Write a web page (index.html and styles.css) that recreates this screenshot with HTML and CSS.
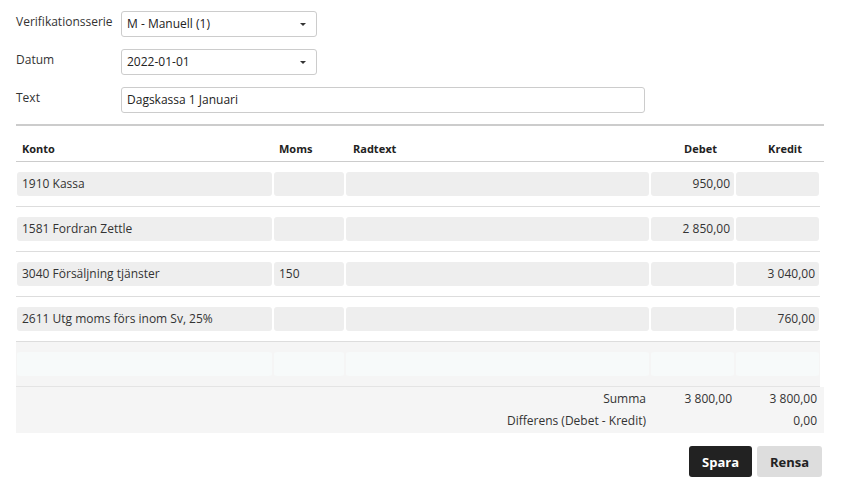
FILE: index.html
```html
<!DOCTYPE html>
<html lang="sv">
<head>
  <meta charset="UTF-8" />
  <title>Verifikation</title>
  <link rel="stylesheet" href="styles.css">
</head>
<body>
  <div class="voucher">
    <div class="fields">
      <label class="field-label">Verifikationsserie</label>
      <div class="select select-short">M - Manuell (1)<span class="caret"></span></div>

      <label class="field-label">Datum</label>
      <div class="select select-short">2022-01-01<span class="caret"></span></div>

      <label class="field-label">Text</label>
      <div class="text-input">Dagskassa 1 Januari</div>
    </div>

    <div class="rows">
      <div class="row head">
        <div>Konto</div>
        <div>Moms</div>
        <div>Radtext</div>
        <div class="num">Debet</div>
        <div class="num">Kredit</div>
      </div>

      <div class="row">
        <div class="cell">1910 Kassa</div>
        <div class="cell"></div>
        <div class="cell"></div>
        <div class="cell num">950,00</div>
        <div class="cell num"></div>
      </div>

      <div class="row">
        <div class="cell">1581 Fordran Zettle</div>
        <div class="cell"></div>
        <div class="cell"></div>
        <div class="cell num">2 850,00</div>
        <div class="cell num"></div>
      </div>

      <div class="row">
        <div class="cell">3040 Försäljning tjänster</div>
        <div class="cell">150</div>
        <div class="cell"></div>
        <div class="cell num"></div>
        <div class="cell num">3 040,00</div>
      </div>

      <div class="row">
        <div class="cell">2611 Utg moms förs inom Sv, 25%</div>
        <div class="cell"></div>
        <div class="cell"></div>
        <div class="cell num"></div>
        <div class="cell num">760,00</div>
      </div>

      <div class="row empty">
        <div class="cell"></div>
        <div class="cell"></div>
        <div class="cell"></div>
        <div class="cell"></div>
        <div class="cell"></div>
      </div>
    </div>

    <div class="totals">
      <div class="total-line">
        <span class="total-label">Summa</span>
        <span class="total-val">3 800,00</span>
        <span class="total-val">3 800,00</span>
      </div>
      <div class="total-line">
        <span class="total-label">Differens (Debet - Kredit)</span>
        <span class="total-val"></span>
        <span class="total-val">0,00</span>
      </div>
    </div>

    <div class="actions">
      <button class="btn btn-save">Spara</button>
      <button class="btn btn-clear">Rensa</button>
    </div>
  </div>
</body>
</html>
```

FILE: styles.css
```css
* {
  box-sizing: border-box;
}

body {
  margin: 0;
  font-family: 'Open Sans', sans-serif;
  font-size: 12px;
  color: #333;
  background: #fff;
}

.voucher {
  width: 808px;
  margin-left: 16px;
  padding-top: 11px;
}

/* top form */
.fields {
  display: grid;
  grid-template-columns: 105px auto;
  row-gap: 12px;
  padding-bottom: 11px;
  border-bottom: 2px solid #ccc;
}

.field-label {
  padding-top: 3px;
  line-height: 16px;
}

.select,
.text-input {
  position: relative;
  height: 26px;
  line-height: 24px;
  padding: 0 5px;
  border: 1px solid #ccc;
  border-radius: 3px;
  background: #fff;
  color: #222;
}

.select-short {
  width: 196px;
}

.text-input {
  width: 524px;
}

.caret {
  position: absolute;
  right: 10px;
  top: 11px;
  border-left: 3px solid transparent;
  border-right: 3px solid transparent;
  border-top: 3px solid #333;
}

/* rows */
.row {
  display: grid;
  grid-template-columns: 255px 70px 303px 83px 83px;
  column-gap: 2px;
  width: 804px;
  padding: 10px 0 10px 1px;
  border-bottom: 1px solid #ddd;
}

.row.head {
  width: 808px;
  padding: 15px 0 1px 0;
  height: 36px;
  border-bottom-color: #ccc;
  font-weight: 700;
  font-size: 11px;
  color: #222;
}

.row.head div {
  padding: 0 6px;
}

.row.head div:nth-child(3) {
  padding-left: 8px;
}

.row.head .num {
  text-align: right;
  padding-right: 16px;
}

.cell {
  height: 24px;
  line-height: 24px;
  padding: 0 5px;
  background: #eee;
  border-radius: 3px;
  white-space: nowrap;
  overflow: hidden;
}

.cell.num {
  text-align: right;
  padding-right: 4px;
}

.row.empty {
  background: #f5f5f5;
  border-bottom-color: #e4e4e4;
}

.row.empty .cell {
  background: #f7fafa;
}

/* totals */
.totals {
  background: #f5f5f5;
  padding: 1px 0 2px;
}

.total-line {
  display: grid;
  grid-template-columns: 630px 86px 85px;
  height: 21px;
  line-height: 21px;
}

.total-line + .total-line {
  margin-top: 1px;
}

.total-label,
.total-val {
  text-align: right;
}

.actions {
  display: flex;
  justify-content: flex-end;
  gap: 5px;
  margin-top: 13px;
  padding-right: 2px;
}

.btn {
  height: 31px;
  border: none;
  border-radius: 3px;
  font-family: 'Open Sans', sans-serif;
  font-size: 13px;
  font-weight: 700;
  cursor: pointer;
}

.btn-save {
  width: 63px;
  background: #222;
  color: #fff;
}

.btn-clear {
  width: 65px;
  background: #ddd;
  color: #222;
}
```
